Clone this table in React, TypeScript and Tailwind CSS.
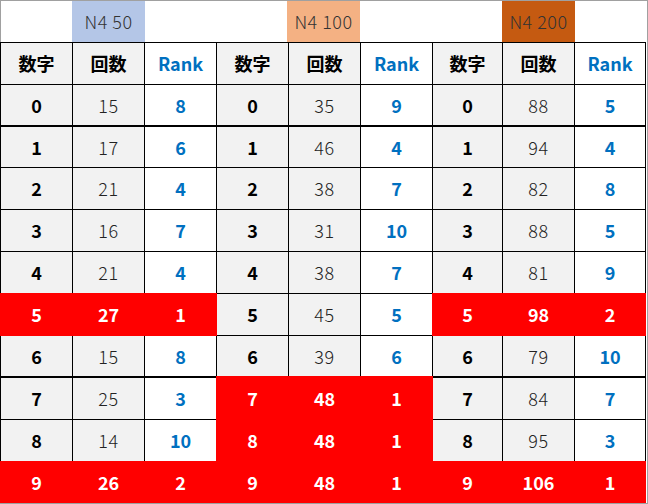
import React from "react";

type Row = [number, number];

const groups: { title: string; titleBg: string; data: Row[]; red: number[] }[] = [
  {
    title: "N4 50",
    titleBg: "bg-[#b4c6e7]",
    data: [[15, 8], [17, 6], [21, 4], [16, 7], [21, 4], [27, 1], [15, 8], [25, 3], [14, 10], [26, 2]],
    red: [5, 9],
  },
  {
    title: "N4 100",
    titleBg: "bg-[#f4b183]",
    data: [[35, 9], [46, 4], [38, 7], [31, 10], [38, 7], [45, 5], [39, 6], [48, 1], [48, 1], [48, 1]],
    red: [7, 8, 9],
  },
  {
    title: "N4 200",
    titleBg: "bg-[#c55a11]",
    data: [[88, 5], [94, 4], [82, 8], [88, 5], [81, 9], [98, 2], [79, 10], [84, 7], [95, 3], [106, 1]],
    red: [5, 9],
  },
];

const colW = ["w-[73px]", "w-[72px]", "w-[72px]", "w-[72px]", "w-[72px]", "w-[72px]", "w-[70px]", "w-[72px]", "w-[71px]"];

const rowH = [
  "h-[42px]",
  "h-[41px]",
  "h-[42px]",
  "h-[42px]",
  "h-[42px]",
  "h-[42px]",
  "h-[42px]",
  "h-[42px]",
  "h-[42px]",
  "h-[41px]",
];

const font = "font-['Noto_Sans_CJK_JP','Noto_Sans',sans-serif]";

function Cell({
  col,
  row,
  red,
  kind,
  children,
}: {
  col: number;
  row: number;
  red: boolean;
  kind: "num" | "count" | "rank";
  children: React.ReactNode;
}) {
  const thick = row === 0 || row === 6;
  const base = `${colW[col]} h-full flex items-center justify-center border-r ${thick ? "border-b-2" : "border-b"} ${col === 0 ? "border-l" : ""}`;
  if (red) {
    const sh =
      row === 7
        ? "shadow-[-1px_-2px_0_0_#ff0000,0_-2px_0_0_#ff0000,-1px_0_0_0_#ff0000]"
        : "shadow-[-1px_-1px_0_0_#ff0000,0_-1px_0_0_#ff0000,-1px_0_0_0_#ff0000]";
    return (
      <div className={`${base} relative z-10 bg-[#ff0000] border-[#ff0000] ${sh} text-white font-bold text-[18px]`}>
        {children}
      </div>
    );
  }
  const bg = kind === "rank" ? "bg-white" : "bg-[#f2f2f2]";
  const tx =
    kind === "num"
      ? "text-black font-bold"
      : kind === "rank"
      ? "text-[#0070c0] font-bold"
      : "text-[#222] font-light tracking-[0.5px]";
  return <div className={`${base} border-black ${bg} ${tx} text-[18px]`}>{children}</div>;
}

export default function App() {
  return (
    <div className={`w-[648px] h-[504px] bg-white border-t border-r border-b border-[#a0a0a0] overflow-hidden ${font}`}>
      {/* title row */}
      <div className="flex h-[41px]">
        <div className="w-[72px] h-full border-l border-[#a0a0a0]" />
        <div className="w-[73px] h-full bg-[#b4c6e7] flex items-center justify-center text-[18px] font-light text-[#333] tracking-[0.5px]">
          N4 50
        </div>
        <div className="w-[142px] h-full" />
        <div className="w-[73px] h-full bg-[#f4b183] flex items-center justify-center text-[18px] font-light text-[#333] tracking-[0.5px]">
          N4 100
        </div>
        <div className="w-[142px] h-full" />
        <div className="w-[73px] h-full bg-[#c55a11] flex items-center justify-center text-[18px] font-light text-[#333] tracking-[0.5px]">
          N4 200
        </div>
        <div className="flex-1 h-full" />
      </div>
      {/* header row */}
      <div className="flex h-[43px]">
        {groups.map((g, gi) => (
          <React.Fragment key={gi}>
            <div
              className={`${colW[gi * 3]} h-full flex items-center justify-center border-t border-r border-b border-black bg-[#f2f2f2] font-bold text-black text-[18px] ${gi === 0 ? "border-l" : ""}`}
            >
              数字
            </div>
            <div
              className={`${colW[gi * 3 + 1]} h-full flex items-center justify-center border-t border-r border-b border-black bg-[#f2f2f2] font-bold text-black text-[18px]`}
            >
              回数
            </div>
            <div
              className={`${colW[gi * 3 + 2]} h-full flex items-center justify-center border-t border-r border-b border-black bg-white font-bold text-[#0070c0] text-[18px]`}
            >
              Rank
            </div>
          </React.Fragment>
        ))}
      </div>
      {/* data rows */}
      {Array.from({ length: 10 }).map((_, r) => (
        <div key={r} className={`flex ${rowH[r]}`}>
          {groups.map((g, gi) => {
            const red = g.red.includes(r);
            const [count, rank] = g.data[r];
            return (
              <React.Fragment key={gi}>
                <Cell col={gi * 3} row={r} red={red} kind="num">
                  {r}
                </Cell>
                <Cell col={gi * 3 + 1} row={r} red={red} kind="count">
                  {count}
                </Cell>
                <Cell col={gi * 3 + 2} row={r} red={red} kind="rank">
                  {rank}
                </Cell>
              </React.Fragment>
            );
          })}
        </div>
      ))}
    </div>
  );
}
